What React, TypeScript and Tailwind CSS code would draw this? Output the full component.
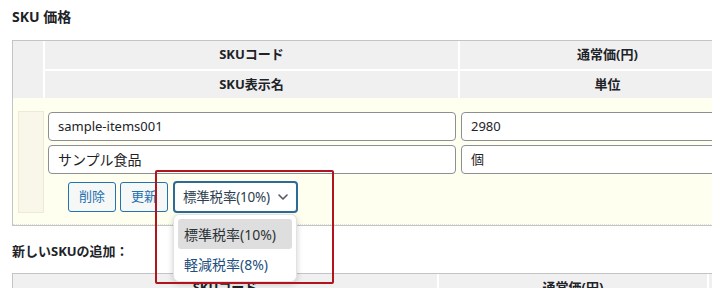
import React from "react";

export default function App() {
  const font = { fontFamily: '"Noto Sans", "Noto Sans CJK JP", sans-serif' };
  return (
    <div
      className="relative w-[712px] h-[288px] overflow-hidden bg-white text-[13px] text-[#1d2327]"
      style={font}
    >
      <div className="pl-[12px]">
        <h3 className="pt-[8px] text-[14px] font-bold leading-[18px] text-[#1d2327]">SKU 価格</h3>

        {/* Table 1 */}
        <div className="mt-[14px] w-[780px] border border-[#c3c4c7] bg-white">
          <div className="grid grid-cols-[30px_413px_1fr] grid-rows-[28px_27px] gap-[2px]">
            <div className="row-span-2 bg-[#f0f0f1]" />
            <div className="flex items-center justify-center bg-[#f0f0f1] font-bold">SKUコード</div>
            <div className="flex items-center justify-center bg-[#f0f0f1] font-bold pr-[36px]">通常価(円)</div>
            <div className="flex items-center justify-center bg-[#f0f0f1] font-bold">SKU表示名</div>
            <div className="flex items-center justify-center bg-[#f0f0f1] font-bold pr-[36px]">単位</div>
          </div>
          <div className="flex bg-[#fffff0] pt-[13px] pb-[11px] border-b border-dotted border-[#e2e2cf]">
            <div className="ml-[5px] w-[26px] h-[102px] bg-[#f8f7e9] border border-[#ecebd9]" />
            <div className="ml-[4px] flex-1 flex flex-col">
              <div className="mt-[1px] grid grid-cols-[408px_1fr] gap-x-[5px] gap-y-[4px]">
                <div className="h-[29px] rounded-[4px] border border-[#8c8f94] bg-white flex items-center px-[9px] text-[13px]">
                  sample-items001
                </div>
                <div className="h-[29px] rounded-[4px] border border-[#8c8f94] bg-white flex items-center px-[9px] text-[13px]">
                  2980
                </div>
                <div className="h-[29px] rounded-[4px] border border-[#8c8f94] bg-white flex items-center px-[9px] text-[14px]">
                  サンプル食品
                </div>
                <div className="h-[29px] rounded-[4px] border border-[#8c8f94] bg-white flex items-center px-[9px] text-[13px]">
                  個
                </div>
              </div>
              <div className="mt-[7px] ml-[20px] flex items-center gap-[4px]">
                <div className="h-[30px] w-[48px] rounded-[3px] border border-[#2271b1] bg-[#f6f7f7] text-[#2271b1] flex items-center justify-center text-[13px]">
                  削除
                </div>
                <div className="h-[30px] w-[48px] rounded-[3px] border border-[#2271b1] bg-[#f6f7f7] text-[#2271b1] flex items-center justify-center text-[13px]">
                  更新
                </div>
                <div className="ml-[1px] h-[32px] w-[125px] rounded-[4px] border-2 border-[#2f6a96] bg-white text-[#2c3e50] flex items-center pl-[8px] pr-[7px] text-[13.5px] whitespace-nowrap">
                  <span className="flex-1 whitespace-nowrap tracking-[-0.2px]">標準税率(10%)</span>
                  <svg width="12" height="12" viewBox="0 0 12 12" fill="none" className="shrink-0">
                    <path d="M2 4l4 4 4-4" stroke="#50575e" strokeWidth="1.6" strokeLinecap="round" strokeLinejoin="round" />
                  </svg>
                </div>
              </div>
            </div>
          </div>
        </div>

        <h3 className="mt-[16px] text-[13px] font-bold leading-[18px] text-[#1d2327]">新しいSKUの追加：</h3>

        {/* Table 2 */}
        <div className="mt-[13px] w-[780px] border border-[#c3c4c7] bg-white">
          <div className="grid grid-cols-[424px_268px_1fr] gap-[2px]">
            <div className="h-[28px] flex items-center justify-center bg-[#f0f0f1] font-bold">SKUコード</div>
            <div className="h-[28px] flex items-center justify-center bg-[#f0f0f1] font-bold">通常価(円)</div>
            <div className="h-[28px] bg-[#f0f0f1]" />
          </div>
        </div>
      </div>

      {/* Dropdown list */}
      <div className="absolute left-[173px] top-[214px] w-[124px] h-[68px] rounded-[6px] bg-white border border-[#e2e2e2] shadow-[0_2px_6px_rgba(0,0,0,0.18)] p-[4px] text-[14px] whitespace-nowrap">
        <div className="h-[30px] rounded-[3px] bg-[#dedede] flex items-center pl-[6px] text-[#2c3338]">標準税率(10%)</div>
        <div className="h-[30px] flex items-center pl-[6px] text-[#1e4f7e]">軽減税率(8%)</div>
      </div>

      {/* Red highlight */}
      <div className="absolute left-[155px] top-[170px] w-[179px] h-[114px] border-2 border-[#b0141c] rounded-[2px]" />
    </div>
  );
}
